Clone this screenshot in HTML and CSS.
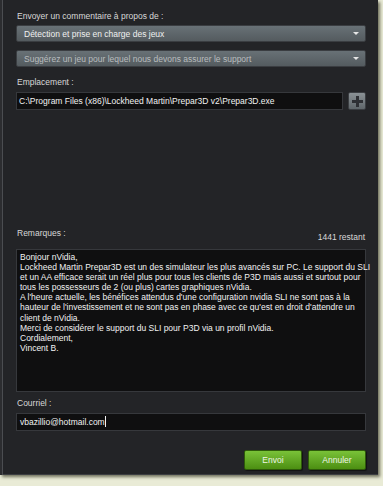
FILE: index.html
```html
<!DOCTYPE html>
<html lang="fr">
<head>
    <meta charset="UTF-8">
    <title>Envoyer un commentaire</title>
    <link rel="stylesheet" href="styles.css">
</head>
<body>
    <div class="panel">
        <div class="label first">Envoyer un commentaire à propos de :</div>
        <div class="select">
            <span>Détection et prise en charge des jeux</span>
            <span class="arrow"></span>
        </div>
        <div class="select dim">
            <span>Suggérez un jeu pour lequel nous devons assurer le support</span>
            <span class="arrow"></span>
        </div>

        <div class="label">Emplacement :</div>
        <div class="path-row">
            <div class="field path">C:\Program Files (x86)\Lockheed Martin\Prepar3D v2\Prepar3D.exe</div>
            <button class="plus" title="Ajouter">
                <svg width="11" height="11" viewBox="0 0 11 11">
                    <path d="M4 0h3v4h4v3H7v4H4V7H0V4h4z" fill="#2e3034"/>
                </svg>
            </button>
        </div>

        <div class="remarks-head">
            <span>Remarques :</span>
            <span class="count">1441 restant</span>
        </div>
        <div class="field notes">Bonjour nVidia,<br>Lockheed Martin Prepar3D est un des simulateur les plus avancés sur PC. Le support du SLI<br>et un AA efficace serait un réel plus pour tous les clients de P3D mais aussi et surtout pour<br>tous les possesseurs de 2 (ou plus) cartes graphiques nVidia.<br>A l'heure actuelle, les bénéfices attendus d'une configuration nvidia SLI ne sont pas à la<br>hauteur de l'investissement et ne sont pas en phase avec ce qu'est en droit d'attendre un<br>client de nVidia.<br>Merci de considérer le support du SLI pour P3D via un profil nVidia.<br>Cordialement,<br>Vincent B.</div>

        <div class="label">Courriel :</div>
        <div class="field mail">vbazillio@hotmail.com<span class="caret"></span></div>

        <div class="actions">
            <button class="btn">Envoi</button>
            <button class="btn">Annuler</button>
        </div>
    </div>
</body>
</html>
```

FILE: styles.css
```css
body {
    margin: 0;
    background: #e9ebd6;
    font-family: "Liberation Sans", Arial, sans-serif;
    font-size: 8.5px;
    color: #d8d8d8;
    width: 383px;
    height: 486px;
    overflow: hidden;
}
.panel {
    width: 378px;
    height: 475px;
    box-sizing: border-box;
    background: #232427;
    border-left: 2px solid #2c2d30;
    box-shadow: inset 1px 0 #4b4d51, inset 0 -1px #3c3e42, 2px 2px 3px rgba(60, 60, 40, 0.7);
    padding: 0 12px 0 14px;
    display: flex;
    flex-direction: column;
}
.label {
    height: 12px;
    line-height: 12px;
    margin: 0 0 4px 1px;
}
.label.first {
    margin-top: 10px;
    margin-bottom: 3px;
}
.select {
    height: 17px;
    box-sizing: border-box;
    border: 1px solid #3a3d41;
    border-radius: 2px;
    background: linear-gradient(to bottom, #687176, #545b5f);
    color: #f0f0f0;
    padding: 0 6px 0 7px;
    display: flex;
    align-items: center;
    justify-content: space-between;
    margin-bottom: 8px;
}
.select.dim {
    color: #b9bdbf;
    margin-bottom: 9px;
}
.arrow {
    width: 0;
    height: 0;
    border-left: 3px solid transparent;
    border-right: 3px solid transparent;
    border-top: 3px solid #e6e6e6;
}
.field {
    box-sizing: border-box;
    background: #0f0f10;
    border: 1px solid #36383c;
    color: #f2f2f2;
}
.path-row {
    display: flex;
    gap: 5px;
    align-items: flex-start;
}
.path {
    flex: 1;
    height: 18px;
    line-height: 16px;
    padding-left: 2px;
}
.plus {
    width: 18px;
    height: 18px;
    padding: 0;
    border: 1px solid #3b3e42;
    border-radius: 2px;
    background: linear-gradient(to bottom, #8a9195, #5f666a);
    display: flex;
    align-items: center;
    justify-content: center;
}
.remarks-head {
    margin-top: 117px;
    display: flex;
    justify-content: space-between;
    align-items: flex-start;
    height: 22px;
    padding-left: 1px;
    line-height: 12px;
}
.count {
    margin-top: 4px;
    margin-right: 1px;
}
.notes {
    height: 143px;
    padding: 2px 3px;
    line-height: 10.1px;
    white-space: nowrap;
    margin-bottom: 5px;
}
.mail {
    height: 18px;
    line-height: 16px;
    padding-left: 3px;
}
.caret {
    display: inline-block;
    width: 1px;
    height: 11px;
    background: #f2f2f2;
    vertical-align: -2px;
}
.actions {
    margin-top: 19px;
    display: flex;
    justify-content: flex-end;
    gap: 6px;
}
.btn {
    width: 58px;
    height: 20px;
    padding: 0;
    border: 1px solid #2e5a0a;
    border-radius: 2px;
    background: linear-gradient(to bottom, #79c238, #4c8f12);
    box-shadow: 1px 1px 1px rgba(0, 0, 0, 0.5);
    color: #eef5e6;
    font-family: "Liberation Sans", Arial, sans-serif;
    font-size: 8.5px;
}
```
